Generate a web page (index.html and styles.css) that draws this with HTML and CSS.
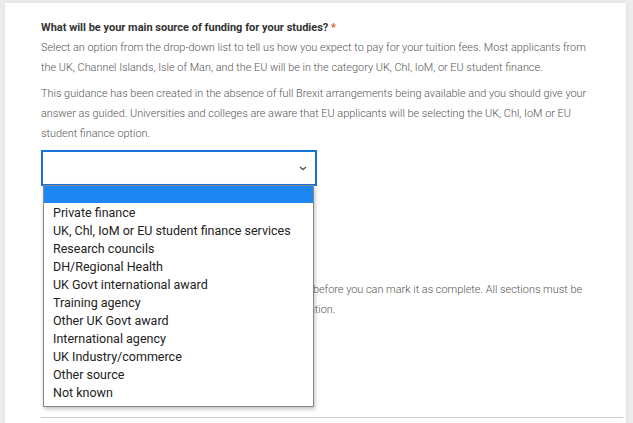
FILE: index.html
```html
<!DOCTYPE html>
<html lang="en">
<head>
  <meta charset="UTF-8">
  <title>Funding</title>
  <meta name="viewport" content="width=device-width, initial-scale=1.0">
  <link rel="stylesheet" href="styles.css">
</head>
<body>

  <div class="card">
    <div class="question">
      <label class="q-title" id="funding-label">What will be your main source of funding for your studies? <span class="req">*</span></label>
      <p class="hint">Select an option from the drop-down list to tell us how you expect to pay for your tuition fees. Most applicants from the UK, Channel Islands, Isle of Man, and the EU will be in the category UK, Chl, IoM, or EU student finance.</p>
      <p class="hint">This guidance has been created in the absence of full Brexit arrangements being available and you should give your answer as guided. Universities and colleges are aware that EU applicants will be selecting the UK, Chl, IoM or EU student finance option.</p>

      <div class="select-wrap">
        <div class="select" role="combobox" aria-expanded="true" aria-labelledby="funding-label">
          <span class="value"></span>
          <svg class="chev" width="8" height="5" viewBox="0 0 8 5"><path d="M1 1l3 2.6L7 1" fill="none" stroke="#555" stroke-width="1.4"/></svg>
        </div>
        <ul class="options" role="listbox">
          <li class="active"></li>
          <li>Private finance</li>
          <li>UK, Chl, IoM or EU student finance services</li>
          <li>Research councils</li>
          <li>DH/Regional Health</li>
          <li>UK Govt international award</li>
          <li>Training agency</li>
          <li>Other UK Govt award</li>
          <li>International agency</li>
          <li>UK Industry/commerce</li>
          <li>Other source</li>
          <li>Not known</li>
        </ul>
      </div>
    </div>

    <p class="note">You'll need to answer all of the questions in this section before you can mark it as complete. All sections must be marked as complete before you can submit your application.</p>

    <hr class="rule">
  </div>

</body>
</html>
```

FILE: styles.css
```css
body {
  margin: 0;
  background: #ececec;
  font-family: Roboto, "Liberation Sans", sans-serif;
}
.card {
  margin: 3px 7px 0 5px;
  padding: 18px 30px 0 36px;
  height: 405px;
  background: #fff;
  box-shadow: 0 0 3px rgba(0, 0, 0, 0.08);
}
.q-title {
  display: block;
  margin-bottom: 3px;
  font-size: 11px;
  font-weight: 700;
  color: #333;
  line-height: 14px;
}
.hint {
  margin: 0 0 6px;
  font-size: 10.9px;
  font-weight: 300;
  line-height: 20px;
  color: #555;
}
.req {
  color: #e0592a;
}
.select-wrap {
  position: relative;
  width: 276px;
  margin-top: 3px;
}
.select {
  height: 32px;
  border: 2px solid #1673dc;
  display: flex;
  align-items: center;
  justify-content: flex-end;
  padding-right: 8px;
}
.options {
  position: absolute;
  top: 35px;
  left: 2px;
  width: 269px;
  margin: 0;
  padding: 0 0 4px;
  list-style: none;
  background: #fff;
  border: 1px solid #888;
  box-shadow: 1px 2px 4px rgba(0, 0, 0, 0.25);
  font-size: 12.5px;
  color: #222;
}
.options li {
  height: 18px;
  line-height: 18px;
  padding-left: 9px;
}
.options li.active {
  height: 17px;
  background: #1e86f0;
  margin-bottom: 1px;
}
.note {
  margin: 94px 0 0;
  padding-left: 7px;
  font-size: 10.9px;
  font-weight: 300;
  line-height: 20px;
  color: #555;
}
.rule {
  margin: 97px -27px 0 0;
  border: 0;
  border-top: 1px solid #ccc;
}
```
